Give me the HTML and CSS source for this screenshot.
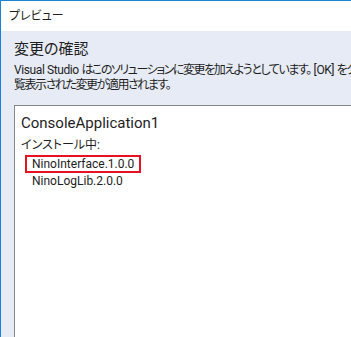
FILE: index.html
```html
<!DOCTYPE html>
<html lang="ja">
<head>
  <meta charset="UTF-8">
  <title>プレビュー</title>
  <link rel="stylesheet" href="styles.css">
</head>
<body>
  <div class="window">
    <div class="titlebar">プレビュー</div>
    <div class="content">
      <h2>変更の確認</h2>
      <p class="desc"><span class="lat">Visual Studio </span>はこのソリューションに変更を加えようとしています。<span class="lat ok">[OK] </span>をクリックすると、一</p>
      <p class="desc">覧表示された変更が適用されます。</p>
      <div class="panel">
        <div class="project">ConsoleApplication1</div>
        <div class="section">インストール中:</div>
        <ul class="packages">
          <li class="marked">NinoInterface.1.0.0</li>
          <li>NinoLogLib.2.0.0</li>
        </ul>
      </div>
    </div>
  </div>
</body>
</html>
```

FILE: styles.css
```css
* {
  margin: 0;
  padding: 0;
  box-sizing: border-box;
}

html, body {
  width: 351px;
  height: 337px;
  overflow: hidden;
  background-color: #fff;
  font-family: 'Roboto', 'Noto Sans CJK JP', sans-serif;
  font-feature-settings: "palt";
  color: #1e1e1e;
}

.window {
  width: 351px;
  height: 337px;
  border-left: 1px solid #1a82d8;
  border-top: 1px solid #1a82d8;
  display: flex;
  flex-direction: column;
}

.titlebar {
  height: 30px;
  flex: none;
  background-color: #fff;
  font-size: 12px;
  line-height: 30px;
  padding-left: 8px;
}

.content {
  flex: 1;
  background-color: #e6ebf5;
  padding: 7px 0 0 13px;
  display: flex;
  flex-direction: column;
  overflow: hidden;
}

h2 {
  font-size: 15px;
  font-weight: 400;
  line-height: 22px;
  margin-bottom: 3px;
}

.desc {
  font-size: 12px;
  line-height: 15px;
  letter-spacing: -1.45px;
  white-space: nowrap;
}

.desc .lat {
  letter-spacing: -0.4px;
}

.desc .ok {
  margin-left: 3px;
}

.panel {
  flex: 1;
  margin-top: 12px;
  background-color: #fff;
  border-top: 1px solid #828790;
  border-left: 1px solid #828790;
  padding: 7px 0 0 6px;
}

.project {
  font-size: 15px;
  line-height: 20px;
  margin-bottom: 5px;
}

.section {
  font-size: 12px;
  line-height: 15px;
}

.packages {
  list-style: none;
  padding-left: 4px;
}

.packages li {
  font-size: 12px;
  line-height: 17px;
  padding-left: 7px;
}

.packages li.marked {
  display: inline-block;
  border: 2px solid #e81123;
  padding: 0 5px 0 5px;
  line-height: 14px;
}
```
